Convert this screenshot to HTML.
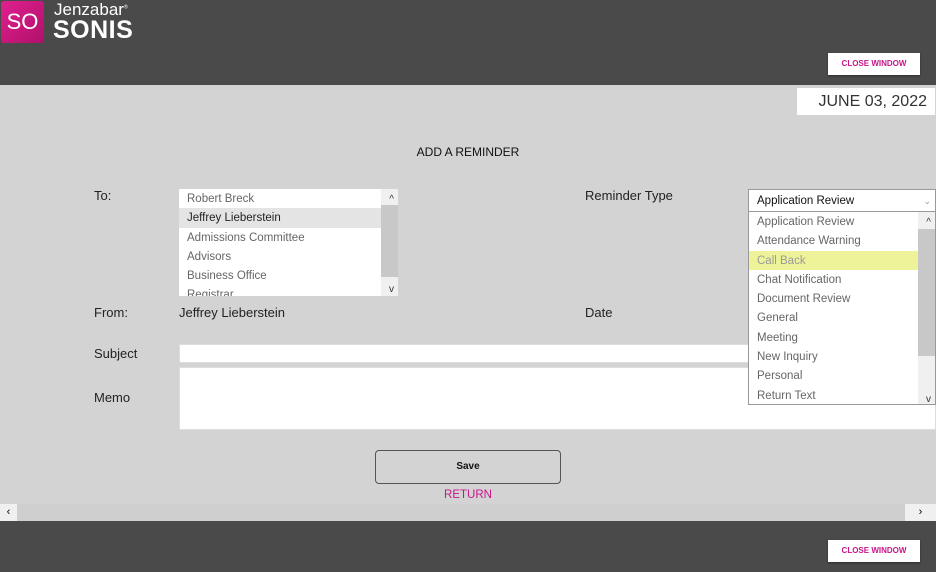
<!DOCTYPE html>
<html><head><style>
*{margin:0;padding:0;box-sizing:border-box}
body{width:936px;height:572px;overflow:hidden;background:#d3d3d3;font-family:"Liberation Sans",sans-serif;position:relative}
.abs{position:absolute}
.hdr{left:0;top:0;width:936px;height:85px;background:#4a4a4a}
.ftr{left:0;top:521px;width:936px;height:51px;background:#4a4a4a}
.btn{background:#fff;color:#c8168a;font-size:8px;font-weight:bold;text-align:center;line-height:22px;width:92px;height:22px;box-shadow:0 1px 2px rgba(0,0,0,.4)}
.lbl{font-size:13px;color:#222}
.list{background:#fff;font-size:11.5px;color:#666}
.list div{height:19.3px;line-height:21px;padding-left:8px;white-space:nowrap}
</style></head><body>
<div class="abs hdr"></div>
<div class="abs" style="left:1px;top:1px;width:43px;height:42px;background:linear-gradient(135deg,#e0208f,#b0106a);border-radius:3px;color:#fff;font-size:22px;line-height:42px;text-align:center">SO</div>
<div class="abs" style="left:54px;top:0px;color:#fff;font-size:17px">Jenzabar<sup style="font-size:5px">®</sup></div>
<div class="abs" style="left:53px;top:16px;color:#fff;font-size:25px;font-weight:bold;letter-spacing:.5px">SONIS</div>
<div class="abs btn" style="left:828px;top:53px">CLOSE WINDOW</div>
<div class="abs" style="left:797px;top:88px;width:138px;height:27px;background:#fff;font-size:16px;color:#333;text-align:right;padding-right:8px;line-height:28px">JUNE 03, 2022</div>
<div class="abs" style="left:0;top:145px;width:936px;text-align:center;font-size:12px;color:#111">ADD A REMINDER</div>
<div class="abs lbl" style="left:94px;top:188px">To:</div>
<div class="abs list" style="left:179px;top:189px;width:219px;height:107px;overflow:hidden">
<div>Robert Breck</div><div style="background:#e4e4e4;color:#222">Jeffrey Lieberstein</div><div>Admissions Committee</div><div>Advisors</div><div>Business Office</div><div>Registrar</div>
<div class="abs" style="right:0;top:0;width:17px;height:107px;background:#f0f0f0;padding:0"></div>
<div class="abs" style="right:0;top:16px;width:17px;height:72px;background:#c8c8c8;padding:0"></div>
<div class="abs" style="right:4px;top:0;font-size:10px;color:#333;padding:0">^</div>
<div class="abs" style="right:4px;top:90px;font-size:10px;color:#333;padding:0">v</div>
</div>
<div class="abs lbl" style="left:585px;top:188px">Reminder Type</div>
<div class="abs lbl" style="left:94px;top:305px">From:</div>
<div class="abs lbl" style="left:179px;top:305px">Jeffrey Lieberstein</div>
<div class="abs lbl" style="left:585px;top:305px">Date</div>
<div class="abs lbl" style="left:94px;top:346px">Subject</div>
<div class="abs" style="left:179px;top:344px;width:570px;height:19px;background:#fff;border:1px solid #ddd"></div>
<div class="abs lbl" style="left:94px;top:390px">Memo</div>
<div class="abs" style="left:179px;top:367px;width:757px;height:63px;background:#fff;border:1px solid #ddd"></div>
<div class="abs" style="z-index:5;left:748px;top:189px;width:188px;height:23px;background:#fff;border:1px solid #999;font-size:11.5px;color:#111;line-height:23px;padding-left:8px">Application Review<span style="position:absolute;right:4px;color:#999;font-size:9px">⌄</span></div>
<div class="abs list" style="z-index:5;left:748px;top:211px;width:188px;height:194px;border:1px solid #999;overflow:hidden">
<div>Application Review</div><div>Attendance Warning</div><div style="background:#eef39a;color:#999">Call Back</div><div>Chat Notification</div><div>Document Review</div><div>General</div><div>Meeting</div><div>New Inquiry</div><div>Personal</div><div>Return Text</div>
<div class="abs" style="right:0;top:0;width:17px;height:194px;background:#f0f0f0;padding:0"></div>
<div class="abs" style="right:0;top:17px;width:17px;height:127px;background:#c8c8c8;padding:0"></div>
<div class="abs" style="right:4px;top:0;font-size:10px;color:#333;padding:0">^</div>
<div class="abs" style="right:4px;top:177px;font-size:10px;color:#333;padding:0">v</div>
</div>
<div class="abs" style="left:375px;top:450px;width:186px;height:34px;border:1px solid #555;border-radius:4px;text-align:center;line-height:32px;font-size:10px;font-weight:bold;color:#111">Save</div>
<div class="abs" style="left:0;top:489px;width:936px;text-align:center;font-size:11.5px;color:#c8168a">RETURN</div>
<div class="abs" style="left:0;top:504px;width:936px;height:17px;background:#cfcfcf"></div>
<div class="abs" style="left:0;top:504px;width:17px;height:17px;background:#f0f0f0;font-size:11px;text-align:center;line-height:17px">‹</div>
<div class="abs" style="left:905px;top:504px;width:31px;height:17px;background:#f0f0f0;font-size:11px;text-align:center;line-height:17px">›</div>
<div class="abs ftr"></div>
<div class="abs btn" style="left:828px;top:540px">CLOSE WINDOW</div>
</body></html>
